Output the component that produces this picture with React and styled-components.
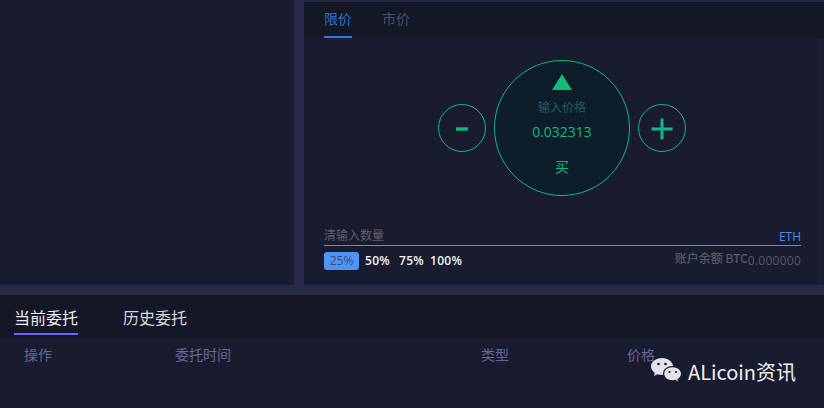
import React from "react";
import styled, { createGlobalStyle } from "styled-components";

const FONT = `"Noto Sans CJK SC", "Open Sans", "Noto Sans", sans-serif`;
const GREEN = "#12b886";
const DARK = "#141726";

const Global = createGlobalStyle`
  html, body { margin: 0; padding: 0; background: #191c2e; }
  * { box-sizing: border-box; }
`;
const Page = styled.div`
  width: 824px; height: 408px; overflow: hidden; display: flex; flex-direction: column;
  font-family: ${FONT}; background: #191c2e; position: relative;
`;
const Top = styled.div`
  height: 295px; display: flex; background: #252a47; padding-bottom: 10px; gap: 10px;
`;
const LeftPanel = styled.div`width: 294px; background: #191c2e;`;
const RightPanel = styled.div`
  width: 520px; margin-top: 2px; background: #191c2e; display: flex; flex-direction: column;
`;
const TabBar = styled.div`
  height: 36px; flex: none; background: ${DARK}; display: flex; gap: 30px; padding-left: 20px;
`;
const Tab = styled.div`
  width: 28px; height: 36px; font-size: 14px; line-height: 32px; white-space: nowrap;
  color: ${p => (p.$active ? "#2f6fc9" : "#4d5069")};
  border-bottom: 2px solid ${p => (p.$active ? "#2f76d6" : "transparent")};
`;
const Body = styled.div`
  flex: 1; display: flex;
`;
const Main = styled.div`
  width: 515px; display: flex; flex-direction: column;
`;
const EdgeStrip = styled.div`
  width: 2px; background: #1e2136;
`;
const Dial = styled.div`
  display: flex; align-items: center; justify-content: center; gap: 8px; margin-top: 22px; height: 136px;
  padding-left: 1px;
`;
const RoundBtn = styled.div`
  width: 48px; height: 48px; border-radius: 50%; border: 1px solid ${GREEN};
  display: flex; align-items: center; justify-content: center; padding-top: 2px;
`;
const BigCircle = styled.div`
  width: 136px; height: 136px; border-radius: 50%; border: 1px solid ${GREEN}; background: #0d1d2a;
  display: flex; flex-direction: column; align-items: center; padding-top: 13px;
`;
const Triangle = styled.div`
  width: 0; height: 0; border-left: 10px solid transparent; border-right: 10px solid transparent;
  border-bottom: 16px solid #14bb74;
`;
const PriceLabel = styled.div`font-size: 12px; line-height: 16px; color: #1f5d59; margin-top: 9px;`;
const PriceValue = styled.div`font-size: 14px; line-height: 18px; color: ${GREEN}; margin-top: 8px; font-family: "Open Sans", sans-serif;`;
const BuyLabel = styled.div`font-size: 14px; line-height: 20px; color: ${GREEN}; margin-top: 15px;`;
const Form = styled.div`padding: 0 18px 0 20px; margin-top: 30px;`;
const InputRow = styled.div`
  display: flex; justify-content: space-between; align-items: flex-end; height: 20px;
  border-bottom: 1px solid #5a8fd6;
`;
const Placeholder = styled.div`font-size: 12px; line-height: 20px; color: #5f6068;`;
const Unit = styled.div`font-size: 12px; line-height: 16px; color: #4a8fe6; font-family: "Open Sans", sans-serif;`;
const PercentRow = styled.div`display: flex; align-items: center; margin-top: 6px;`;
const Percent = styled.div`
  font-size: 12px; line-height: 18px; height: 18px; font-family: "Open Sans", sans-serif; font-weight: 600;
  letter-spacing: 0.3px; color: #f2f3f6; margin-right: ${p => p.$gap}px;
`;
const ActivePercent = styled.div`
  font-size: 12px; line-height: 18px; height: 18px; width: 35px; text-align: center; border-radius: 3px;
  background: #4e95f5; color: #2e4f80; font-family: "Open Sans", sans-serif; margin-right: 6px;
`;
const Balance = styled.div`
  margin-left: auto; display: flex; align-items: flex-start; color: #575965; font-size: 12px; line-height: 18px;
  font-weight: 500; height: 18px;
`;
const BalanceLabel = styled.span`position: relative; top: -3px;`;
const BalanceValue = styled.span`font-family: "Open Sans", sans-serif; line-height: 18px; letter-spacing: 0.25px;`;
const OrdersBar = styled.div`
  height: 42px; flex: none; background: ${DARK}; display: flex; gap: 45px; padding-left: 14px;
`;
const OrdersTab = styled.div`
  height: 40px; font-size: 16px; line-height: 44px; color: ${p => (p.$active ? "#e9eaf2" : "#d5d6de")};
  border-bottom: ${p => (p.$active ? "2px solid #6c63ff" : "none")};
`;
const Columns = styled.div`
  display: grid; grid-template-columns: 151px 306px 146px 60px; padding: 7px 0 0 24px;
`;
const Column = styled.div`font-size: 14px; line-height: 20px; color: #66659b;`;
const Watermark = styled.div`
  position: absolute; left: 651px; top: 358px; display: flex; align-items: center; gap: 6px;
  color: #f0f0f2; font-size: 20px; line-height: 27px;
`;

const Minus = () => (
  <svg width="12" height="4" viewBox="0 0 12 4"><rect y="0.300" width="12" height="3.400" fill={GREEN} /></svg>
);
const Plus = () => (
  <svg width="22" height="22" viewBox="0 0 22 22"><path d="M0.500 11h21M11 0.500v21" stroke={GREEN} strokeWidth="3" /></svg>
);
const WeChat = () => (
  <svg width="31" height="27" viewBox="0 0 31 27">
    <path d="M11 0C5 0 0 3.700 0 8.500c0 2.700 1.500 4.800 3.800 6.400L3 18l3.400-1.800c1.500.4 3 .6 4.600.6 5.800 0 11-3.600 11-8.300C22 3.700 17 0 11 0z" fill="#e4e4e8" />
    <path d="M21.500 8C16.300 8 12 11.300 12 15.500S16.300 23 21.500 23c1.100 0 2.100-.2 3.100-.5L27.500 24.500l-.7-3.200c2.500-1.400 4.200-3.400 4.200-5.800C31 11.300 26.700 8 21.500 8z" fill="#191c2e" />
    <path d="M21.500 9.300c-4.600 0-8.300 2.800-8.300 6.500s3.700 6.500 8.300 6.500c1 0 2-.2 2.900-.5l2.500 2-.6-2.900c2.300-1.100 3.700-3 3.700-5.100 0-3.700-3.900-6.500-8.500-6.500z" fill="#e4e4e8" />
    <circle cx="7.500" cy="6" r="1.300" fill="#191c2e" /><circle cx="14.500" cy="6" r="1.300" fill="#191c2e" />
    <circle cx="18.500" cy="14" r="1.100" fill="#191c2e" /><circle cx="25" cy="14" r="1.100" fill="#191c2e" />
  </svg>
);

export default function App() {
  return (
    <Page>
      <Global />
      <Top>
        <LeftPanel />
        <RightPanel>
          <TabBar>
            <Tab $active>限价</Tab>
            <Tab>市价</Tab>
          </TabBar>
          <Body>
            <Main>
              <Dial>
                <RoundBtn><Minus /></RoundBtn>
                <BigCircle>
                  <Triangle />
                  <PriceLabel>输入价格</PriceLabel>
                  <PriceValue>0.032313</PriceValue>
                  <BuyLabel>买</BuyLabel>
                </BigCircle>
                <RoundBtn><Plus /></RoundBtn>
              </Dial>
              <Form>
                <InputRow>
                  <Placeholder>清输入数量</Placeholder>
                  <Unit>ETH</Unit>
                </InputRow>
                <PercentRow>
                  <ActivePercent>25%</ActivePercent>
                  <Percent $gap={9}>50%</Percent>
                  <Percent $gap={6}>75%</Percent>
                  <Percent $gap={0}>100%</Percent>
                  <Balance>
                    <BalanceLabel>账户余额 BTC</BalanceLabel>
                    <BalanceValue>0.000000</BalanceValue>
                  </Balance>
                </PercentRow>
              </Form>
            </Main>
            <EdgeStrip />
          </Body>
        </RightPanel>
      </Top>
      <OrdersBar>
        <OrdersTab $active>当前委托</OrdersTab>
        <OrdersTab>历史委托</OrdersTab>
      </OrdersBar>
      <Columns>
        <Column>操作</Column>
        <Column>委托时间</Column>
        <Column>类型</Column>
        <Column>价格</Column>
      </Columns>
      <Watermark><WeChat />ALicoin资讯</Watermark>
    </Page>
  );
}
